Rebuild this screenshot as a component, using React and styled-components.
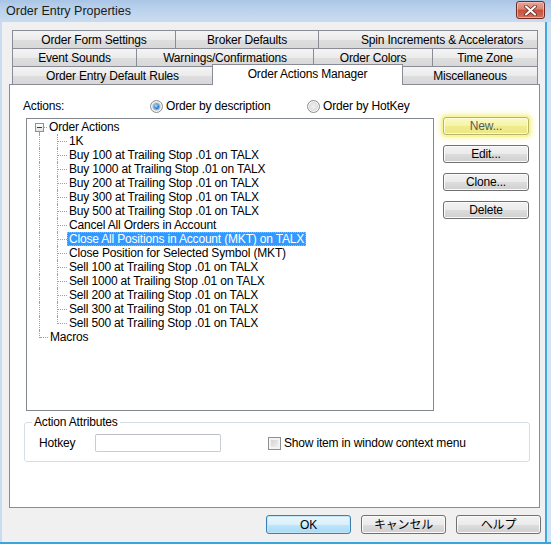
import React from "react";
import styled, { createGlobalStyle, css } from "styled-components";

const GlobalStyle = createGlobalStyle`
  html, body {
    margin: 0;
    padding: 0;
    background: #ffffff;
  }
  body {
    font-family: "Liberation Sans", "Noto Sans CJK JP", sans-serif;
    font-size: 12px;
    letter-spacing: -0.18px;
    color: #000;
  }
  * {
    box-sizing: border-box;
  }
`;

const Window = styled.div`
  width: 551px;
  height: 544px;
  display: flex;
  flex-direction: column;
  overflow: hidden;
  background: linear-gradient(
    to right,
    #c9dbef 0,
    #c9dbef 545px,
    #3ea9de 545px,
    #3ea9de 547px,
    #d2e3f4 547px
  );
  border-bottom: 2px solid #38a6dd;
`;

const TitleBar = styled.div`
  height: 22px;
  flex: none;
  display: flex;
  align-items: flex-start;
  justify-content: space-between;
  padding-left: 6px;
  background: linear-gradient(to bottom, #a9c5e5 0%, #bcd3ed 45%, #c8dbf0 100%);
`;

const Title = styled.div`
  line-height: 22px;
  font-size: 12.5px;
  letter-spacing: 0;
  color: #1b1b1b;
`;

const CloseButton = styled.div`
  width: 29px;
  height: 18px;
  margin: 1px 6px 0 0;
  border: 1px solid #6f2a22;
  border-radius: 3px;
  display: flex;
  align-items: center;
  justify-content: center;
  background: linear-gradient(
    to bottom,
    #e9a797 0%,
    #d98272 45%,
    #c4503d 50%,
    #d3705c 100%
  );
  box-shadow: inset 0 0 0 1px rgba(255, 210, 200, 0.6);
`;

const Client = styled.div`
  flex: 1;
  margin: 0 6px 0 2px;
  background: #f0f0f0;
  display: flex;
  flex-direction: column;
`;

const TabControl = styled.div`
  margin: 8px 0 0 7px;
  width: 531px;
  display: flex;
  flex-direction: column;
`;

const TabStrip = styled.div`
  padding-left: 3px;
  display: flex;
  flex-direction: column;
`;

const TabRow = styled.div`
  display: flex;
  align-items: flex-end;
  height: 18px;
`;

const Tab = styled.div`
  flex: none;
  width: ${(p) => p.$w}px;
  height: 18px;
  margin-left: -1px;
  &:first-child {
    margin-left: 0;
  }
  padding-left: ${(p) => p.$shift || 0}px;
  border: 1px solid #898c95;
  border-bottom: none;
  background: linear-gradient(
    to bottom,
    #f4f4f4 0%,
    #ebebeb 50%,
    #dedede 51%,
    #d8d8d8 100%
  );
  display: flex;
  align-items: center;
  justify-content: center;
  white-space: nowrap;
  line-height: 16px;
  ${(p) =>
    p.$active &&
    css`
      position: relative;
      z-index: 2;
      height: 21px;
      margin-bottom: -1px;
      background: #ffffff;
      align-items: flex-start;
      padding-top: 1px;
    `}
`;

const Panel = styled.div`
  position: relative;
  z-index: 1;
  height: 424px;
  border: 1px solid #898c95;
  background: #ffffff;
  display: flex;
  flex-direction: column;
`;

const HeaderRow = styled.div`
  height: 33px;
  padding: 13px 0 0 13px;
  display: flex;
  align-items: flex-start;
  line-height: 16px;
`;

const FieldLabel = styled.div`
  width: ${(p) => p.$w}px;
  flex: none;
`;

const RadioOption = styled.label`
  display: flex;
  align-items: center;
  gap: 3px;
  height: 16px;
  width: ${(p) => (p.$w ? `${p.$w}px` : "auto")};
  flex: none;
`;

const RadioCircle = styled.span`
  position: relative;
  flex: none;
  width: 13px;
  height: 13px;
  border-radius: 50%;
  border: 1px solid #8e8f8f;
  background: radial-gradient(circle at 50% 50%, #f2f2f2 0, #dadada 65%, #ececec 100%);
  box-shadow: inset 0 0 0 1px #f7f7f7;
  ${(p) =>
    p.$checked &&
    css`
      &::after {
        content: "";
        position: absolute;
        left: 3px;
        top: 3px;
        width: 5px;
        height: 5px;
        border-radius: 50%;
        background: radial-gradient(circle at 40% 35%, #b4e8ff 0, #2c84d6 55%, #0d4d98 100%);
        box-shadow: 0 0 1px 1px rgba(40, 110, 190, 0.55);
      }
    `}
`;

const MainRow = styled.div`
  display: flex;
  align-items: flex-start;
  padding-left: 16px;
`;

const TreeBox = styled.div`
  width: 408px;
  height: 293px;
  flex: none;
  border: 1px solid #828790;
  background: #ffffff;
  padding-top: 1px;
  overflow: hidden;
`;

const TreeRow = styled.div`
  display: flex;
  align-items: center;
  height: 14px;
`;

const dotted = "1px dotted #a0a0a0";

const Expander = styled.span`
  position: relative;
  flex: none;
  width: 20px;
  height: 14px;
  &::before {
    content: "";
    position: absolute;
    left: 12px;
    top: 12px;
    height: 2px;
    border-left: ${dotted};
  }
  &::after {
    content: "";
    position: absolute;
    left: 17px;
    right: 0;
    top: 7px;
    border-top: ${dotted};
  }
`;

const ExpanderBox = styled.span`
  position: absolute;
  left: 8px;
  top: 3px;
  width: 9px;
  height: 9px;
  border: 1px solid #919191;
  background: linear-gradient(to bottom, #ffffff, #e2e2e2);
  &::after {
    content: "";
    position: absolute;
    left: 1px;
    top: 3px;
    width: 5px;
    height: 1px;
    background: #1d3d8a;
  }
`;

const Pipe = styled.span`
  position: relative;
  flex: none;
  width: 18px;
  height: 14px;
  &::before {
    content: "";
    position: absolute;
    left: 12px;
    top: 0;
    height: 14px;
    border-left: ${dotted};
  }
`;

const Elbow = styled.span`
  position: relative;
  flex: none;
  width: ${(p) => p.$w}px;
  height: 14px;
  &::before {
    content: "";
    position: absolute;
    left: 12px;
    top: 0;
    height: ${(p) => (p.$last ? "8px" : "14px")};
    border-left: ${dotted};
  }
  &::after {
    content: "";
    position: absolute;
    left: 13px;
    right: 0;
    top: 7px;
    border-top: ${dotted};
  }
`;

const NodeLabel = styled.span`
  height: 14px;
  line-height: 14px;
  padding: 0 2px;
  white-space: nowrap;
  ${(p) =>
    p.$selected &&
    css`
      background: #3399ff;
      color: #ffffff;
      outline: 1px dotted #f3a64a;
      outline-offset: -1px;
    `}
`;

const ButtonColumn = styled.div`
  margin: -1px 0 0 9px;
  display: flex;
  flex-direction: column;
  gap: 10px;
`;

const Button = styled.button`
  width: ${(p) => p.$w || 86}px;
  height: ${(p) => p.$h || 18}px;
  padding: 0;
  font: inherit;
  font-size: 12px;
  letter-spacing: -0.18px;
  color: #000;
  border: 1px solid #707070;
  border-radius: 3px;
  background: linear-gradient(
    to bottom,
    #f2f2f2 0%,
    #ebebeb 50%,
    #dddddd 51%,
    #cfcfcf 100%
  );
  box-shadow: inset 0 0 0 1px #fbfbfb;
  line-height: 14px;
  ${(p) =>
    p.$hot &&
    css`
      color: #5a5a5a;
      border-color: #b7b36a;
      background: linear-gradient(to bottom, #fbf9c4 0%, #f6f3a6 50%, #f0ec8e 51%, #ece884 100%);
      box-shadow: inset 0 0 0 1px #fdfce0, 0 0 0 2px rgba(248, 246, 140, 0.75),
        0 0 5px 3px rgba(240, 236, 110, 0.6);
    `}
  ${(p) =>
    p.$default &&
    css`
      border-color: #3c7fb1;
      background: linear-gradient(to bottom, #eaf6fd 0%, #d9f0fc 50%, #bee6fd 51%, #a7d9f5 100%);
      box-shadow: inset 0 0 0 1px #c4e5f6;
    `}
`;

const GroupBox = styled.fieldset`
  margin: 4px 0 0 14px;
  width: 506px;
  padding: 5px 0 9px 0;
  border: 1px solid #d5dfe5;
  border-radius: 3px;
  min-width: 0;
`;

const GroupLegend = styled.legend`
  margin-left: 7px;
  padding: 0 2px;
  line-height: 14px;
  height: 14px;
`;

const AttrRow = styled.div`
  display: flex;
  align-items: center;
  padding-left: 14px;
  height: 18px;
`;

const TextInput = styled.input`
  width: 126px;
  height: 18px;
  flex: none;
  border: 1px solid #c9ccd2;
  border-top-color: #bcc0c6;
  background: #ffffff;
  border-radius: 2px;
  padding: 0 2px;
  font: inherit;
  outline: none;
`;

const CheckOption = styled.label`
  display: flex;
  align-items: center;
  gap: 3px;
  margin-left: 47px;
`;

const CheckBox = styled.span`
  flex: none;
  width: 13px;
  height: 13px;
  border: 1px solid #8e8f8f;
  background: linear-gradient(135deg, #cbcbcb 0%, #e6e6e6 60%, #f6f6f6 100%);
  box-shadow: inset 0 0 0 2px #f4f4f4;
`;

const Footer = styled.div`
  margin-top: 7px;
  padding-right: 4px;
  display: flex;
  justify-content: flex-end;
  gap: 10px;
`;

const tabRows = [
  [
    { label: "Order Form Settings", w: 164 },
    { label: "Broker Defaults", w: 144 },
    { label: "Spin Increments & Accelerators", w: 220, shift: 28 },
  ],
  [
    { label: "Event Sounds", w: 125 },
    { label: "Warnings/Confirmations", w: 178 },
    { label: "Order Colors", w: 120 },
    { label: "Time Zone", w: 106 },
  ],
  [
    { label: "Order Entry Default Rules", w: 201 },
    { label: "Order Actions Manager", w: 191, active: true },
    { label: "Miscellaneous", w: 136 },
  ],
];

const actions = [
  "1K",
  "Buy 100 at Trailing Stop .01 on TALX",
  "Buy 1000 at Trailing Stop .01 on TALX",
  "Buy 200 at Trailing Stop .01 on TALX",
  "Buy 300 at Trailing Stop .01 on TALX",
  "Buy 500 at Trailing Stop .01 on TALX",
  "Cancel All Orders in Account",
  "Close All Positions in Account (MKT) on TALX",
  "Close Position for Selected Symbol (MKT)",
  "Sell 100 at Trailing Stop .01 on TALX",
  "Sell 1000 at Trailing Stop .01 on TALX",
  "Sell 200 at Trailing Stop .01 on TALX",
  "Sell 300 at Trailing Stop .01 on TALX",
  "Sell 500 at Trailing Stop .01 on TALX",
];

const selectedAction = "Close All Positions in Account (MKT) on TALX";

const CloseGlyph = () => (
  <svg width="13" height="11" viewBox="0 0 13 11">
    <path
      d="M2 1.5 L11 9.5 M11 1.5 L2 9.5"
      stroke="#5a2019"
      strokeWidth="3.6"
      strokeLinecap="round"
    />
    <path
      d="M2 1.5 L11 9.5 M11 1.5 L2 9.5"
      stroke="#ffffff"
      strokeWidth="2.2"
      strokeLinecap="round"
    />
  </svg>
);

const App = () => {
  return (
    <>
      <GlobalStyle />
      <Window>
        <TitleBar>
          <Title>Order Entry Properties</Title>
          <CloseButton>
            <CloseGlyph />
          </CloseButton>
        </TitleBar>
        <Client>
          <TabControl>
            <TabStrip>
              {tabRows.map((row, i) => (
                <TabRow key={i}>
                  {row.map((t) => (
                    <Tab key={t.label} $w={t.w} $shift={t.shift} $active={t.active}>
                      {t.label}
                    </Tab>
                  ))}
                </TabRow>
              ))}
            </TabStrip>
            <Panel>
              <HeaderRow>
                <FieldLabel $w={127}>Actions:</FieldLabel>
                <RadioOption $w={157}>
                  <RadioCircle $checked />
                  Order by description
                </RadioOption>
                <RadioOption>
                  <RadioCircle />
                  Order by HotKey
                </RadioOption>
              </HeaderRow>
              <MainRow>
                <TreeBox>
                  <TreeRow>
                    <Expander>
                      <ExpanderBox />
                    </Expander>
                    <NodeLabel>Order Actions</NodeLabel>
                  </TreeRow>
                  {actions.map((a, i) => (
                    <TreeRow key={a}>
                      <Pipe />
                      <Elbow $w={22} $last={i === actions.length - 1} />
                      <NodeLabel $selected={a === selectedAction}>{a}</NodeLabel>
                    </TreeRow>
                  ))}
                  <TreeRow>
                    <Elbow $w={21} $last />
                    <NodeLabel>Macros</NodeLabel>
                  </TreeRow>
                </TreeBox>
                <ButtonColumn>
                  <Button $hot>New...</Button>
                  <Button>Edit...</Button>
                  <Button>Clone...</Button>
                  <Button>Delete</Button>
                </ButtonColumn>
              </MainRow>
              <GroupBox>
                <GroupLegend>Action Attributes</GroupLegend>
                <AttrRow>
                  <FieldLabel $w={56}>Hotkey</FieldLabel>
                  <TextInput type="text" />
                  <CheckOption>
                    <CheckBox />
                    Show item in window context menu
                  </CheckOption>
                </AttrRow>
              </GroupBox>
            </Panel>
          </TabControl>
          <Footer>
            <Button $w={85} $h={19} $default>
              OK
            </Button>
            <Button $w={85} $h={19}>
              キャンセル
            </Button>
            <Button $w={85} $h={19}>
              ヘルプ
            </Button>
          </Footer>
        </Client>
      </Window>
    </>
  );
};

export default App;
